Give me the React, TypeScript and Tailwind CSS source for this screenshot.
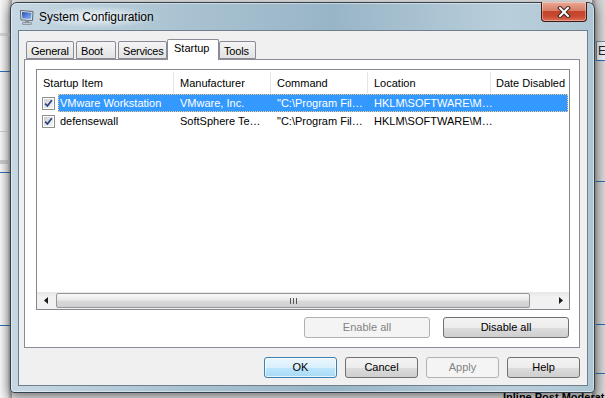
import React from "react";

const items = [
  {
    name: "VMware Workstation",
    maker: "VMware, Inc.",
    cmd: "\"C:\\Program Fil…",
    loc: "HKLM\\SOFTWARE\\M…",
    selected: true,
  },
  {
    name: "defensewall",
    maker: "SoftSphere Te…",
    cmd: "\"C:\\Program Fil…",
    loc: "HKLM\\SOFTWARE\\M…",
    selected: false,
  },
];

function CheckBox() {
  return (
    <div className="w-[13px] h-[13px] border border-[#8e8f8f] bg-white p-[1px]">
      <div className="relative w-full h-full bg-[linear-gradient(135deg,#cbcfd5,#f6f6f6)]">
        <svg className="absolute inset-0" width="9" height="9" viewBox="0 0 9 9">
          <path d="M1.2 4.6 L3.4 7 L7.8 1.2" fill="none" stroke="#2b3f7e" strokeWidth="1.7" />
        </svg>
      </div>
    </div>
  );
}

function Btn({ children, kind = "normal", w = "w-[73px]" }: { children: React.ReactNode; kind?: "normal" | "default" | "disabled"; w?: string }) {
  let cls = "border-[#707070] bg-[linear-gradient(#f3f3f3_0%,#ececec_50%,#dddddd_51%,#cfcfcf_100%)] text-black";
  if (kind === "default")
    cls = "border-[#3c7fb1] bg-[linear-gradient(#eaf6fd_0%,#d9f0fc_50%,#bee6fd_51%,#a7d9f5_100%)] text-black shadow-[inset_0_0_0_1px_rgba(255,255,255,0.7)]";
  if (kind === "disabled") cls = "border-[#adb2b5] bg-[#f4f4f4] text-[#838383]";
  return (
    <div className={`${w} h-[21px] rounded-[3px] border flex items-center justify-center text-[11px] ${cls}`}>
      {children}
    </div>
  );
}

function Tab({ label, w, selected, ml }: { label: string; w: string; selected?: boolean; ml?: string }) {
  if (selected)
    return (
      <div className={`${w} h-[21px] border border-b-0 border-[#898c95] rounded-t-[2px] bg-white pl-[6px] pt-[2px] leading-[13px]`}>
        {label}
      </div>
    );
  return (
    <div
      className={`${w} ${ml ?? ""} mt-[2px] h-[18px] border border-[#898c95] rounded-t-[2px] bg-[linear-gradient(#f4f4f4,#e3e3e3)] pl-[4px] pt-[3px] leading-[13px] whitespace-nowrap tracking-[-0.2px]`}
    >
      {label}
    </div>
  );
}

export default function App() {
  return (
    <div className="relative w-[605px] h-[398px] overflow-hidden bg-[#e8e8e8] font-['Liberation_Sans',Arial,sans-serif] text-[11px] text-black">
      {/* desktop behind the dialog */}
      <div className="absolute left-0 top-0 w-[12px] h-[398px] bg-[linear-gradient(90deg,#f7f7f7,#e2e2e2_60%,#9a9a9a)]" />
      <div className="absolute left-0 top-[33px] w-[10px] h-[3px] bg-[#d5d5d5]" />
      <div className="absolute left-0 top-[71px] w-[10px] h-[1px] bg-[#2d6db3]" />
      <div className="absolute left-0 top-[131px] w-[10px] h-[1px] bg-[#cfcfcf]" />
      <div className="absolute left-0 top-[160px] w-[10px] h-[4px] bg-[#c9c9c9]" />
      <div className="absolute left-0 top-[172px] w-[10px] h-[1px] bg-[#2d6db3]" />
      <div className="absolute left-0 top-[325px] w-[10px] h-[1px] bg-[#2d6db3]" />

      <div className="absolute left-[592px] top-0 w-[13px] h-[398px] bg-[linear-gradient(90deg,#8d8d8d,#c9c9c9_40%,#d8d8d8)]" />
      <div className="absolute left-[596px] top-[41px] w-[12px] h-[19px] border-l border-t border-[#7a8a99] bg-[#eef2f6] pl-[1px] pt-[3px] text-[12px] leading-[13px] text-[#222]">
        E
      </div>
      <div className="absolute left-[596px] top-[60px] w-[9px] h-[1px] bg-[#2d6db3]" />
      <div className="absolute left-[596px] top-[181px] w-[9px] h-[1px] bg-[#2d6db3]" />
      <div className="absolute left-[596px] top-[324px] w-[9px] h-[1px] bg-[#2d6db3]" />
      <div className="absolute left-[596px] top-[373px] w-[9px] h-[1px] bg-[#2d6db3]" />
      <div className="absolute left-[503px] top-[391px] text-[11px] font-bold leading-[13px] whitespace-nowrap">
        Inline Post Moderat
      </div>

      {/* window */}
      <div className="absolute left-[10px] top-[2px] w-[585px] h-[391px] rounded-t-[7px] rounded-b-[4px] border border-[#34414b] bg-[linear-gradient(90deg,#c6d8e3_0%,#a9c2d1_30%,#98b5c7_55%,#b9cedb_85%,#aec6d4_100%)] shadow-[inset_0_0_0_1px_rgba(255,255,255,0.45),0_3px_12px_rgba(0,0,0,0.55)] flex flex-col pl-[7px] pr-[6px] pb-[6px]">
        <div className="relative h-[27px] flex items-center">
          <div className="absolute left-[14px] top-[3px] w-[130px] h-[22px] bg-[radial-gradient(ellipse_at_center,rgba(255,255,255,0.8),rgba(255,255,255,0)_70%)]" />
          <svg className="relative ml-[1px]" width="16" height="16" viewBox="0 0 16 16">
            <defs>
              <linearGradient id="scr" x1="0" y1="0" x2="1" y2="1">
                <stop offset="0" stopColor="#1f4fb8" />
                <stop offset="1" stopColor="#8fb9ef" />
              </linearGradient>
            </defs>
            <path d="M1.5 1.5 L14 2.5 L13.5 11.5 L2 11 Z" fill="#e4e8ee" stroke="#5c6672" />
            <path d="M3 3 L12.5 3.8 L12.2 10 L3.3 9.6 Z" fill="url(#scr)" />
            <rect x="6" y="11.5" width="4" height="2" fill="#8b939c" />
            <rect x="3.5" y="13.5" width="9" height="2" rx="0.5" fill="#c3c8ce" stroke="#6d747c" strokeWidth="0.6" />
          </svg>
          <span className="relative ml-[4px] text-[12px] leading-[14px] text-black">System Configuration</span>
          <div className="absolute right-[1px] top-[-1px] w-[46px] h-[20px] rounded-b-[4px] border border-t-0 border-[#3f1a12] bg-[linear-gradient(#eaa895_0%,#d77e69_45%,#c5432b_50%,#c84a31_75%,#dd7058_100%)] shadow-[inset_0_0_0_1px_rgba(255,255,255,0.35)] flex items-center justify-center">
            <svg width="14" height="12" viewBox="0 0 14 12">
              <path d="M3 2 L11 10 M11 2 L3 10" stroke="#3b2420" strokeWidth="4" strokeLinecap="square" />
              <path d="M3 2 L11 10 M11 2 L3 10" stroke="#ffffff" strokeWidth="2" strokeLinecap="square" />
            </svg>
          </div>
        </div>

        {/* client area */}
        <div className="flex-1 border border-[#6f808c] bg-[#f0f0f0] flex flex-col pl-[5px] pr-[7px] pt-[8px]">
          <div className="relative z-10 flex items-start h-[20px]">
            <Tab label="General" w="w-[48px]" ml="ml-[2px]" />
            <Tab label="Boot" w="w-[40px]" ml="ml-[2px]" />
            <Tab label="Services" w="w-[49px]" ml="ml-[2px]" />
            <Tab label="Startup" w="w-[52px]" selected />
            <Tab label="Tools" w="w-[37px]" />
          </div>

          <div className="h-[289px] border border-[#898c95] bg-white flex flex-col pl-[11px] pr-[9px] pt-[9px]">
            {/* list view */}
            <div className="h-[241px] border border-[#828790] bg-white flex flex-col overflow-hidden">
              <div className="h-[24px] flex shrink-0 pt-[2px]">
                <div className="w-[137px] shrink-0 border-r border-[#e5e5e5] pl-[6px] flex items-center">Startup Item</div>
                <div className="w-[97px] shrink-0 border-r border-[#e5e5e5] pl-[6px] flex items-center">Manufacturer</div>
                <div className="w-[97px] shrink-0 border-r border-[#e5e5e5] pl-[6px] flex items-center">Command</div>
                <div className="w-[123px] shrink-0 border-r border-[#e5e5e5] pl-[6px] flex items-center">Location</div>
                <div className="w-[100px] shrink-0 pl-[5px] flex items-center whitespace-nowrap">Date Disabled</div>
              </div>

              {items.map((it) => (
                <div key={it.name} className="h-[18px] flex shrink-0">
                  <div className="w-[21px] shrink-0 pl-[5px] flex items-center">
                    <CheckBox />
                  </div>
                  <div
                    className={`flex flex-1 mr-[1px] whitespace-nowrap ${
                      it.selected ? "bg-[#3399ff] text-white border border-dotted border-[#f5c98a]" : "border border-transparent"
                    }`}
                  >
                    <div className="w-[115px] shrink-0 pl-[1px] flex items-center">{it.name}</div>
                    <div className="w-[97px] shrink-0 pl-[6px] flex items-center">{it.maker}</div>
                    <div className="w-[97px] shrink-0 pl-[6px] flex items-center">{it.cmd}</div>
                    <div className="w-[123px] shrink-0 pl-[6px] flex items-center">{it.loc}</div>
                    <div className="flex-1" />
                  </div>
                </div>
              ))}

              <div className="flex-1" />

              {/* horizontal scrollbar */}
              <div className="h-[17px] shrink-0 flex bg-[linear-gradient(#e6e6e6,#f2f2f2_30%,#f0f0f0)]">
                <div className="w-[17px] flex items-center justify-center">
                  <svg width="4" height="7" viewBox="0 0 4 7">
                    <path d="M4 0 L0 3.5 L4 7 Z" fill="#1a1a1a" />
                  </svg>
                </div>
                <div className="flex-1 flex items-center pl-[2px] pr-[22px]">
                  <div className="w-[474px] h-[15px] rounded-[2px] border border-[#979797] bg-[linear-gradient(#f8f8f8,#eaeaea_45%,#d9d9d9_55%,#cfcfcf)] flex items-center justify-center gap-[2px]">
                    <div className="w-[1px] h-[6px] bg-[#555]" />
                    <div className="w-[1px] h-[6px] bg-[#555]" />
                    <div className="w-[1px] h-[6px] bg-[#555]" />
                  </div>
                </div>
                <div className="w-[17px] flex items-center justify-center">
                  <svg width="4" height="7" viewBox="0 0 4 7">
                    <path d="M0 0 L4 3.5 L0 7 Z" fill="#1a1a1a" />
                  </svg>
                </div>
              </div>
            </div>

            <div className="mt-[7px] flex justify-end gap-[13px] pr-[1px]">
              <Btn kind="disabled" w="w-[126px]">Enable all</Btn>
              <Btn w="w-[126px]">Disable all</Btn>
            </div>
          </div>

          <div className="mt-[9px] flex justify-end gap-[8px]">
            <Btn kind="default">OK</Btn>
            <Btn>Cancel</Btn>
            <Btn kind="disabled">Apply</Btn>
            <Btn>Help</Btn>
          </div>
        </div>
      </div>
    </div>
  );
}
